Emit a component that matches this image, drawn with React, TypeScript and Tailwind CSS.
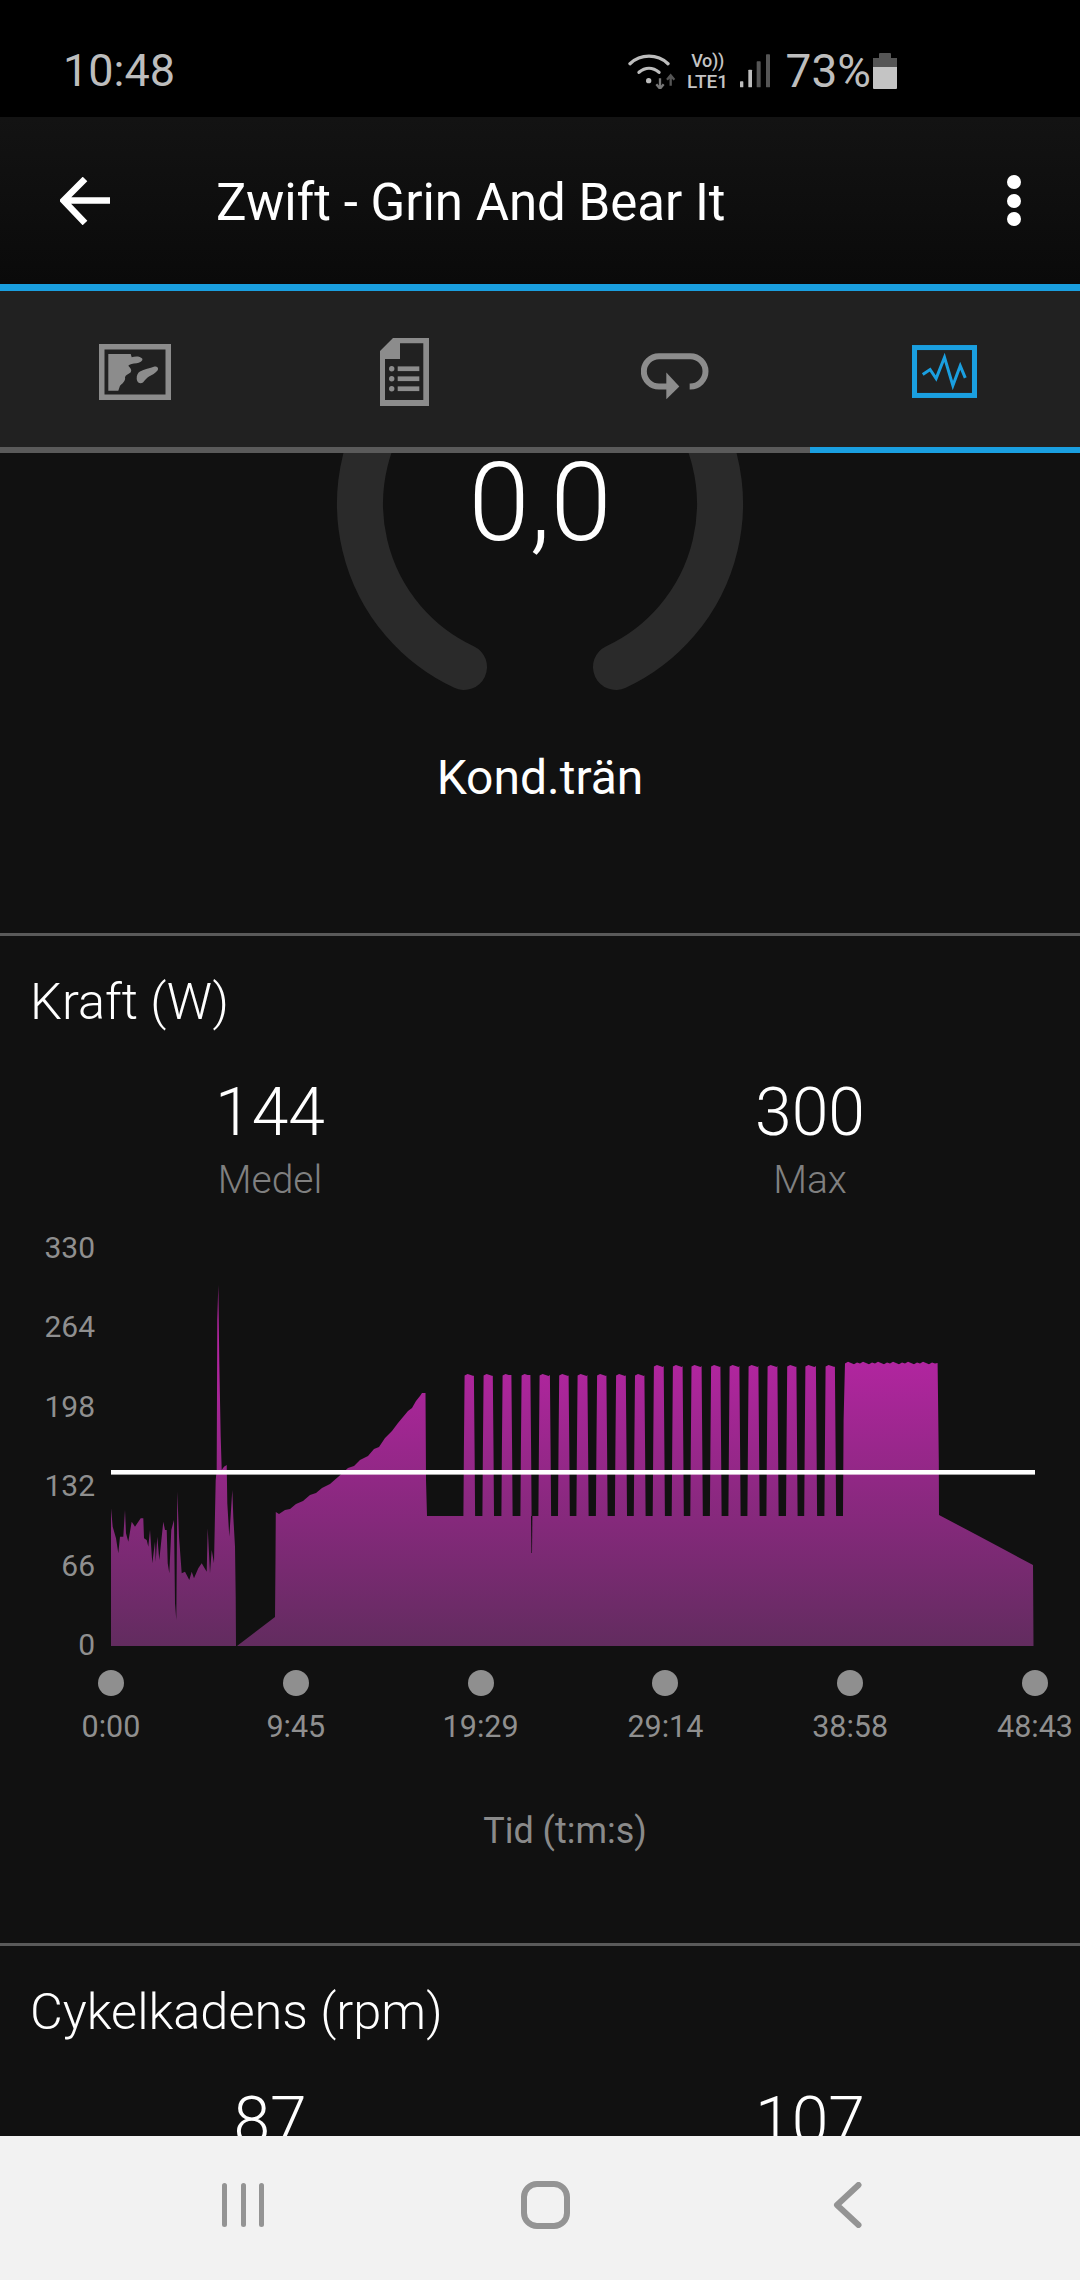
const noise: [number, number][] = [
  [33,715],[38,770],[48,805],[55,850],[60,800],[70,800],[75,720],[78,790],[85,815],[95,755],[105,770],[122,745],[130,745],[132,805],[140,810],[145,830],[150,780],[157,880],[165,815],[167,875],[172,800],[178,870],[190,755],[195,780],[200,780],[203,880],[208,910],[214,780],[222,750],[225,1000],[229,1050],[232,665],[237,800],[245,910],[255,905],[268,930],[275,905],[282,925],[295,895],[305,880],[320,905],[323,775],[330,910],[335,840],[342,880],[347,630],[350,600],[352,150],[355,45],[358,280],[362,500],[365,600],[372,590],[380,585],[382,700],[388,800],[397,660],[400,740],[405,830],[407,980],[408,1128],
];

const ragged = (x0: number, x1: number, y: number, amp: number, step = 3) => {
  const out: string[] = [];
  let i = 0;
  for (let x = x0; x < x1; x += step) {
    const w = ((i * 7 + 3) % 5) - 2;
    out.push(`L${x.toFixed(1)} ${(y + (w * amp) / 2).toFixed(1)}`);
    i++;
  }
  out.push(`L${x1.toFixed(1)} ${y.toFixed(1)}`);
  return out.join(" ");
};

const bars: [number, number, number][] = [
  [465,473.5,1375],[484,492.4,1375],[503,511,1375],[522,530,1375],
  [540,549.5,1375],[559.6,568.2,1375],[578,587,1375],[597.5,606,1375],[616.5,625.4,1375],[635.4,644,1375],
  [654.3,663.3,1366],[673.3,682.2,1366],[691.9,701.2,1366],[711.5,720,1366],[730,739,1366],[749,758,1366],[768,777,1366],[787.6,796,1366],[805.8,815.5,1366],[826,834.5,1366],
];

const ramp: [number, number][] = [
  [275.8,1512],[279,1514],[285,1510],[290,1509],[296,1504],[303,1501],[310,1495],[316,1493],[322,1488],[330,1484],[338,1477],[348,1468],[354,1466],[360,1460],[368,1456],[374,1449],[379,1447],[385,1438],[392,1431],[398,1423],[403,1417],[408,1411],[412,1408],[416,1401],[420,1396],[422,1393],[425.5,1393],
];

const buildPath = () => {
  const p: string[] = [];
  p.push("M111 1646");
  noise.forEach(([x, y]) => p.push(`L${(100 + x / 3).toFixed(1)} ${(1270 + y / 3).toFixed(1)}`));
  p.push("L237 1646 L275 1617 L275.5 1560");
  ramp.forEach(([x, y]) => p.push(`L${x} ${y}`));
  p.push("L426 1480 L427 1516");
  let prevEnd = 427;
  bars.forEach(([a, b, t]) => {
    const l = a - 0.4;
    const r = b + 0.4;
    p.push(`L${prevEnd} 1516 L${(l - 1.2).toFixed(1)} 1516 L${(l - 0.7).toFixed(1)} 1450 L${l.toFixed(1)} ${t}`);
    p.push(ragged(l, r, t, 1));
    p.push(`L${(r + 0.7).toFixed(1)} 1450 L${(r + 1.2).toFixed(1)} 1516`);
    prevEnd = r + 1.2;
  });
  p.push(`L843 1516 L843.6 1420 L845 1363`);
  p.push(ragged(845, 937.6, 1363, 1.2));
  p.push("L938.8 1460 L939 1515 L975 1534 L1005 1550 L1033 1565 L1033.5 1646 Z");
  return p.join(" ");
};

const ticks = ["0:00", "9:45", "19:29", "29:14", "38:58", "48:43"];
const yLabels = ["330", "264", "198", "132", "66", "0"];

function MapIcon() {
  return (
    <svg width="72" height="56" viewBox="0 0 72 56">
      <rect x="2.75" y="2.75" width="66.5" height="50.5" fill="none" stroke="#8c8c8c" strokeWidth="5.5" />
      <path d="M9.3 10H31.7L32.7 13.3C36 12 41 12 43.2 14.5C44.5 17 40 18.8 37.7 19.3C34 19.8 30.5 20 29.3 21.7C31 23.5 33.5 26 31.5 28.5C29 30.5 26.5 31 26 33.3C26.5 36 25.5 38 21 41.7L19.3 46.7H9.3Z" fill="#8c8c8c" />
      <path d="M37.7 35C37.5 31 39 28.5 41 27.5C45 25.5 51 24 55.5 22.5C58.5 22 60 24.5 58.5 26.5C56.5 29 53 31 50 32.5C47.5 34 46 36 44 38.5C41.5 40 38 39 37.7 35Z" fill="#8c8c8c" />
    </svg>
  );
}

function DocIcon() {
  return (
    <svg width="49" height="68" viewBox="0 0 49 68">
      <path fillRule="evenodd" d="M13 0H49V68H0V13ZM20 5.3V21H5V62H43.3V5.3Z" fill="#8c8c8c" />
      <circle cx="11.7" cy="30.7" r="2.7" fill="#8c8c8c" />
      <circle cx="11.7" cy="40.7" r="2.7" fill="#8c8c8c" />
      <circle cx="11.7" cy="50.7" r="2.7" fill="#8c8c8c" />
      <rect x="17.7" y="28.4" width="21.6" height="4.7" fill="#8c8c8c" />
      <rect x="17.7" y="38.4" width="21.6" height="4.7" fill="#8c8c8c" />
      <rect x="17.7" y="48.4" width="21.6" height="4.7" fill="#8c8c8c" />
    </svg>
  );
}

function LoopIcon() {
  return (
    <svg width="68" height="47" viewBox="122 132 204 140">
      <path d="M268 232H270A45.5 45.5 0 0 0 270 141H176A45.5 45.5 0 0 0 176 232H205" fill="none" stroke="#8c8c8c" strokeWidth="18" />
      <path d="M198 190L237 232L198 270Z" fill="#8c8c8c" />
    </svg>
  );
}

function ChartIcon() {
  return (
    <svg width="65" height="53" viewBox="936 105 194 158">
      <rect x="943.5" y="112.5" width="179" height="143" fill="none" stroke="#1a9fe0" strokeWidth="15" />
      <path d="M968 193L990 178L1008 205L1033 142L1058 226L1080 167L1095 203" fill="none" stroke="#1a9fe0" strokeWidth="9" />
    </svg>
  );
}

function WifiIcon() {
  return (
    <svg width="49" height="36" viewBox="80 92 147 108">
      <path d="M86 124C118 94 168 94 200 124" fill="none" stroke="#bdbdbd" strokeWidth="10" strokeLinecap="round" />
      <path d="M113 150C132 134 154 134 173 150" fill="none" stroke="#bdbdbd" strokeWidth="10" strokeLinecap="round" />
      <circle cx="142" cy="175" r="8" fill="#bdbdbd" />
      <path d="M176 168V198M165 186L176 199L187 186" fill="none" stroke="#777" strokeWidth="7" />
      <path d="M208 190V160M197 172L208 159L219 172" fill="none" stroke="#555" strokeWidth="7" />
    </svg>
  );
}

function SignalIcon() {
  return (
    <svg width="32" height="34" viewBox="412 104 96 100">
      <rect x="415" y="185" width="10" height="18" rx="2" fill="#bdbdbd" />
      <rect x="440" y="150" width="11" height="53" rx="2" fill="#bdbdbd" />
      <rect x="465" y="125" width="12" height="78" rx="2" fill="#555" />
      <rect x="493" y="104" width="12" height="99" rx="2" fill="#555" />
    </svg>
  );
}

function Stat({ value, label }: { value: string; label: string }) {
  return (
    <div className="flex flex-col items-center">
      <div className="text-[66px] leading-[76px] font-light text-white">{value}</div>
      {label ? <div className="mt-[7px] text-[39px] leading-[44px] font-light text-[#808080]">{label}</div> : null}
    </div>
  );
}

export default function App() {
  return (
    <div className="w-[1080px] h-[2280px] flex flex-col overflow-hidden bg-[#111111] font-['Roboto',sans-serif]">
      <div className="h-[117px] shrink-0 bg-black flex items-center justify-between pl-[63px] pr-[183px] pt-[26px]">
        <span className="text-[45px] leading-[50px] text-[#bdbdbd] mt-[-2px]">10:48</span>
        <div className="flex items-center mt-[-2px]">
          <WifiIcon />
          <div className="ml-[8px] flex flex-col items-center text-[#c4c4c4] font-medium w-[46px]">
            <span className="text-[18px] leading-[21px] tracking-[-0.3px]">Vo))</span>
            <span className="text-[19px] leading-[21px] tracking-[0px]">LTE1</span>
          </div>
          <div className="ml-[8px]"><SignalIcon /></div>
          <span className="ml-[15px] text-[46px] leading-[50px] text-[#bdbdbd]">73%</span>
          <div className="ml-[2px] w-[24px] h-[36px] flex flex-col items-center">
            <div className="w-[12px] h-[5px] bg-[#555] rounded-t-[1px]" />
            <div className="w-[24px] h-[9px] bg-[#555]" />
            <div className="w-[24px] h-[22px] bg-[#c4c4c4] rounded-b-[1px]" />
          </div>
        </div>
      </div>

      <div className="h-[167px] shrink-0 bg-gradient-to-b from-[#131313] to-[#0a0a0a] flex items-center relative pl-[60px]">
        <svg width="50" height="48" viewBox="0 0 50 48" className="shrink-0">
          <path d="M50 23.5H6M25 2L3.5 23.5L25 46" fill="none" stroke="#ffffff" strokeWidth="6.5" />
        </svg>
        <span className="ml-[106px] text-[51px] leading-[56px] text-white mt-[4px]">Zwift - Grin And Bear It</span>
        <div className="ml-auto mr-[59px] flex flex-col gap-[4.5px]">
          <div className="w-[14px] h-[14px] rounded-full bg-white" />
          <div className="w-[14px] h-[14px] rounded-full bg-white" />
          <div className="w-[14px] h-[14px] rounded-full bg-white" />
        </div>
      </div>

      <div className="h-[7px] shrink-0 bg-[#1a9fe0]" />
      <div className="h-[156px] shrink-0 bg-[#212121] grid grid-cols-4 items-center justify-items-center">
        <div className="mt-[6px]"><MapIcon /></div>
        <div className="mt-[6px] mr-[2px]"><DocIcon /></div>
        <div className="mt-[14px]"><LoopIcon /></div>
        <div className="mt-[4px] mr-[2px]"><ChartIcon /></div>
      </div>
      <div className="h-[6px] shrink-0 bg-[#5a5a5a] flex justify-end">
        <div className="w-[270px] bg-[#1a9fe0]" />
      </div>

      <main className="flex-1 min-h-0 overflow-hidden bg-[#111111]">
        <section className="h-[480px] flex flex-col items-center">
          <div className="relative mt-[-152px] w-[408px] h-[412px] shrink-0">
            <svg width="408" height="412" viewBox="336 301 408 412">
              <path d="M464 667A180 180 0 1 1 616 667" fill="none" stroke="#2a2a2a" strokeWidth="46" strokeLinecap="round" />
            </svg>
            <div className="absolute inset-x-0 top-[162px] text-center text-[110px] leading-[80px] font-light text-white">0,0</div>
          </div>
          <div className="mt-[38px] text-[48px] leading-[54px] text-white">Kond.trän</div>
        </section>

        <div className="h-[3px] bg-[#5a5a5a]" />

        <section className="h-[1007px]">
          <h2 className="pt-[38px] pl-[30px] text-[50.5px] leading-[56px] font-light text-white">Kraft (W)</h2>
          <div className="mt-[45px] grid grid-cols-2">
            <Stat value="144" label="Medel" />
            <Stat value="300" label="Max" />
          </div>

          <div className="mt-[28px] h-[430px] flex">
            <div className="w-[96px] h-[433px] shrink-0 flex flex-col justify-between text-right text-[30px] leading-[36px] text-[#8f8f8f]">
              {yLabels.map((l) => (
                <span key={l} className="pr-[1px]">{l}</span>
              ))}
            </div>
            <svg width="984" height="430" viewBox="96 1230 984 430" className="shrink-0">
              <defs>
                <linearGradient id="power" gradientUnits="userSpaceOnUse" x1="0" y1="1362" x2="0" y2="1646">
                  <stop offset="0" stopColor="#b1259f" />
                  <stop offset="1" stopColor="#622c5f" />
                </linearGradient>
              </defs>
              <path d={buildPath()} fill="url(#power)" />
              <path d="M531 1516L531.4 1553L532 1553L532.4 1516Z" fill="#111111" />
              <rect x="111" y="1470" width="924" height="4.6" fill="#ffffff" />
            </svg>
          </div>

          <div className="mt-[10px] ml-[18.6px] flex w-[1109px]">
            {ticks.map((t) => (
              <div key={t} className="w-[184.8px] shrink-0 flex flex-col items-center">
                <div className="w-[26px] h-[26px] rounded-full bg-[#8f8f8f]" />
                <span className="mt-[13px] text-[30.5px] leading-[36px] text-[#8f8f8f] whitespace-nowrap">{t}</span>
              </div>
            ))}
          </div>

          <div className="mt-[65px] pl-[50px] text-center text-[36px] leading-[42px] text-[#8a8a8a]">Tid (t:m:s)</div>
        </section>

        <div className="h-[3px] bg-[#5a5a5a]" />

        <section>
          <h2 className="pt-[38px] pl-[30px] text-[50.5px] leading-[56px] font-light text-white">Cykelkadens (rpm)</h2>
          <div className="mt-[44px] grid grid-cols-2">
            <Stat value="87" label="" />
            <Stat value="107" label="" />
          </div>
        </section>
      </main>

      <nav className="h-[144px] shrink-0 bg-[#f2f2f2] flex items-start">
        <div className="ml-[222px] mt-[47px] flex gap-[13.5px]">
          <div className="w-[5px] h-[44px] rounded-full bg-[#949494]" />
          <div className="w-[5px] h-[44px] rounded-full bg-[#949494]" />
          <div className="w-[5px] h-[44px] rounded-full bg-[#949494]" />
        </div>
        <div className="ml-[257px] mt-[45px] w-[49px] h-[48px] rounded-[16px] border-[6px] border-[#949494]" />
        <svg width="30" height="46" viewBox="0 0 30 46" className="ml-[262px] mt-[46px]">
          <path d="M26.5 3L5 23L26.5 43" fill="none" stroke="#949494" strokeWidth="6" strokeLinecap="round" strokeLinejoin="round" />
        </svg>
      </nav>
    </div>
  );
}
